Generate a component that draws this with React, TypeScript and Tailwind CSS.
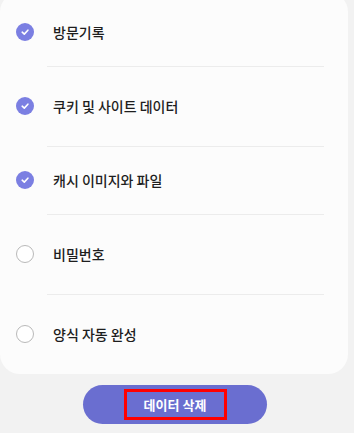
import React from 'react';

type Item = { label: string; checked: boolean; pad: string; last?: boolean };

const items: Item[] = [
  { label: '방문기록', checked: true, pad: 'pt-[30px] pb-[24px]' },
  { label: '쿠키 및 사이트 데이터', checked: true, pad: 'pt-[29px] pb-[30px]' },
  { label: '캐시 이미지와 파일', checked: true, pad: 'pt-[23px] pb-[24px]' },
  { label: '비밀번호', checked: false, pad: 'pt-[29px] pb-[30px]' },
  { label: '양식 자동 완성', checked: false, pad: 'pt-[29px] pb-[30px]', last: true },
];

function CheckMark({ checked }: { checked: boolean }) {
  if (!checked) {
    return <span className="block w-[18px] h-[18px] rounded-full border-[1.5px] border-[#b9b9b9] bg-white" />;
  }
  return (
    <span className="flex items-center justify-center w-[18px] h-[18px] rounded-full bg-[#7b7fe2]">
      <svg width="10" height="10" viewBox="0 0 10 10" fill="none">
        <path d="M2.2 5.2 L4.3 7.1 L7.9 3.2" stroke="#ffffff" strokeWidth="1.6" strokeLinecap="round" strokeLinejoin="round" />
      </svg>
    </span>
  );
}

export default function App() {
  return (
    <div
      className="w-[354px] h-[433px] overflow-hidden bg-[#f2f2f2] flex flex-col"
      style={{ fontFamily: '"Noto Sans CJK KR", "Noto Sans", sans-serif' }}
    >
      {/* options card */}
      <div className="-mt-[8px] w-[348px] bg-[#fcfcfc] rounded-[20px]">
        {items.map((item) => (
          <div key={item.label}>
            <div className={item.pad}>
              <div className="flex items-center h-5 pl-4">
                <CheckMark checked={item.checked} />
                <span className="ml-[19px] text-[14px] font-medium leading-5 text-[#1e1e1e]">{item.label}</span>
              </div>
            </div>
            {!item.last && <div className="ml-[47px] mr-[24px] h-px bg-[#ececec]" />}
          </div>
        ))}
      </div>

      {/* delete button */}
      <div className="mt-[11px] flex justify-center pr-[4px]">
        <button className="w-[184px] h-[39px] rounded-full bg-[#6a6ed0] flex items-center justify-center">
          <span className="w-[103px] h-[31px] border-[3px] border-[#ff0000] flex items-center justify-center text-white text-[13px] font-bold">
            데이터 삭제
          </span>
        </button>
      </div>
    </div>
  );
}
